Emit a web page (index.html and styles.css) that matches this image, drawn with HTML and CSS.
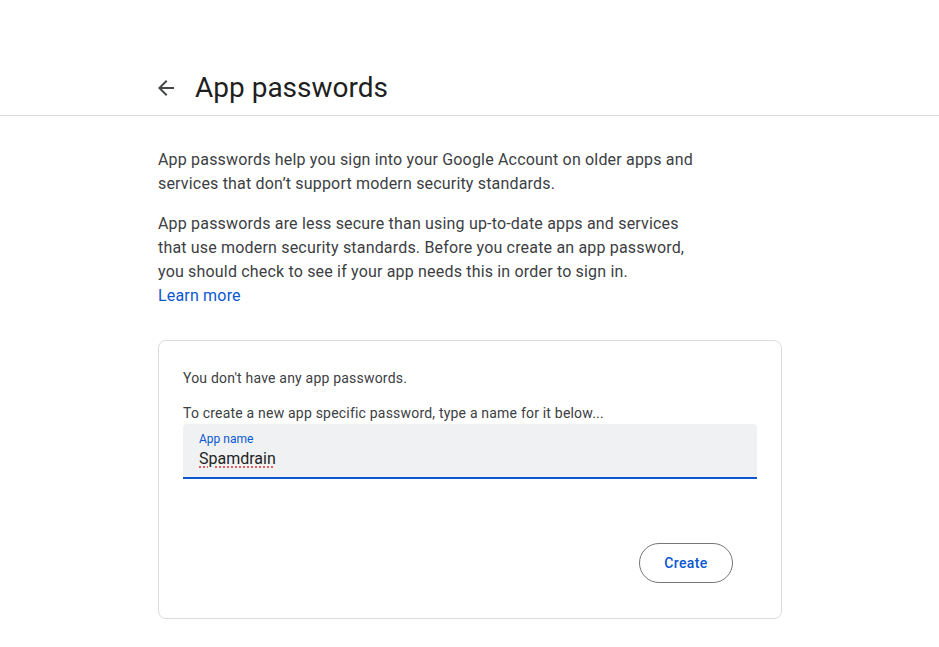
FILE: index.html
```html
<!DOCTYPE html>
<html lang="en">
<head>
  <meta charset="UTF-8" />
  <title>App passwords</title>
  <link rel="stylesheet" href="styles.css">
</head>
<body>
  <header class="topbar">
    <a class="back" href="#" aria-label="Back">
      <svg width="24" height="24" viewBox="0 0 24 24"><path d="M20 11H7.83l5.59-5.59L12 4l-8 8 8 8 1.41-1.41L7.83 13H20v-2z" fill="#444746"/></svg>
    </a>
    <h1>App passwords</h1>
  </header>

  <main class="content">
    <p class="intro">App passwords help you sign into your Google Account on older apps and services that don’t support modern security standards.</p>
    <p class="intro">App passwords are less secure than using up-to-date apps and services that use modern security standards. Before you create an app password, you should check to see if your app needs this in order to sign in.<br><a href="#" class="link">Learn more</a></p>

    <section class="card">
      <p class="note">You don't have any app passwords.</p>
      <p class="note hint">To create a new app specific password, type a name for it below...</p>
      <div class="field">
        <label class="field-label" for="appName">App name</label>
        <div class="field-value" id="appName"><span class="misspelled">Spamdrain</span></div>
      </div>
      <div class="actions">
        <button class="btn-outline">Create</button>
      </div>
    </section>
  </main>
</body>
</html>
```

FILE: styles.css
```css
body {
  margin: 0;
  font-family: Roboto, "Liberation Sans", sans-serif;
  background: #fff;
  color: #1f1f1f;
}

.topbar {
  display: flex;
  align-items: center;
  padding: 70px 0 9px 154px;
  border-bottom: 1px solid #dadce0;
}

.back {
  display: flex;
  width: 24px;
  height: 24px;
  margin-right: 17px;
}

.topbar h1 {
  margin: 0;
  font-size: 28px;
  line-height: 36px;
  font-weight: 400;
  color: #1f1f1f;
}

.content {
  margin-left: 158px;
  padding-top: 32px;
}

.intro {
  max-width: 540px;
  margin: 0 0 16px;
  font-size: 16px;
  line-height: 24px;
  letter-spacing: 0.18px;
  color: #3c4043;
}

.link {
  color: #0b57d0;
  text-decoration: none;
}

.card {
  width: 574px;
  margin-top: 32px;
  padding: 27px 24px 35px 24px;
  border: 1px solid #dadce0;
  border-radius: 8px;
}

.note {
  margin: 0;
  font-size: 14px;
  line-height: 20px;
  letter-spacing: 0.2px;
  color: #3c4043;
}

.hint {
  margin-top: 15px;
}

.field {
  margin-top: 1px;
  padding: 7px 16px 6px;
  background: #f0f1f3;
  border-radius: 4px 4px 0 0;
  border-bottom: 2px solid #0b57d0;
}

.field-label {
  display: block;
  font-size: 12px;
  line-height: 16px;
  color: #0b57d0;
}

.field-value {
  font-size: 16px;
  line-height: 24px;
  color: #1f1f1f;
}

.misspelled {
  text-decoration: underline dotted #e53935;
  text-underline-offset: 3px;
}

.actions {
  display: flex;
  justify-content: flex-end;
  margin-top: 64px;
  padding-right: 24px;
}

.btn-outline {
  width: 94px;
  height: 40px;
  padding: 0;
  border: 1px solid #747775;
  border-radius: 20px;
  background: #fff;
  color: #0b57d0;
  font-family: Roboto, "Liberation Sans", sans-serif;
  font-size: 14px;
  font-weight: 500;
  letter-spacing: 0.4px;
  cursor: pointer;
}
```
